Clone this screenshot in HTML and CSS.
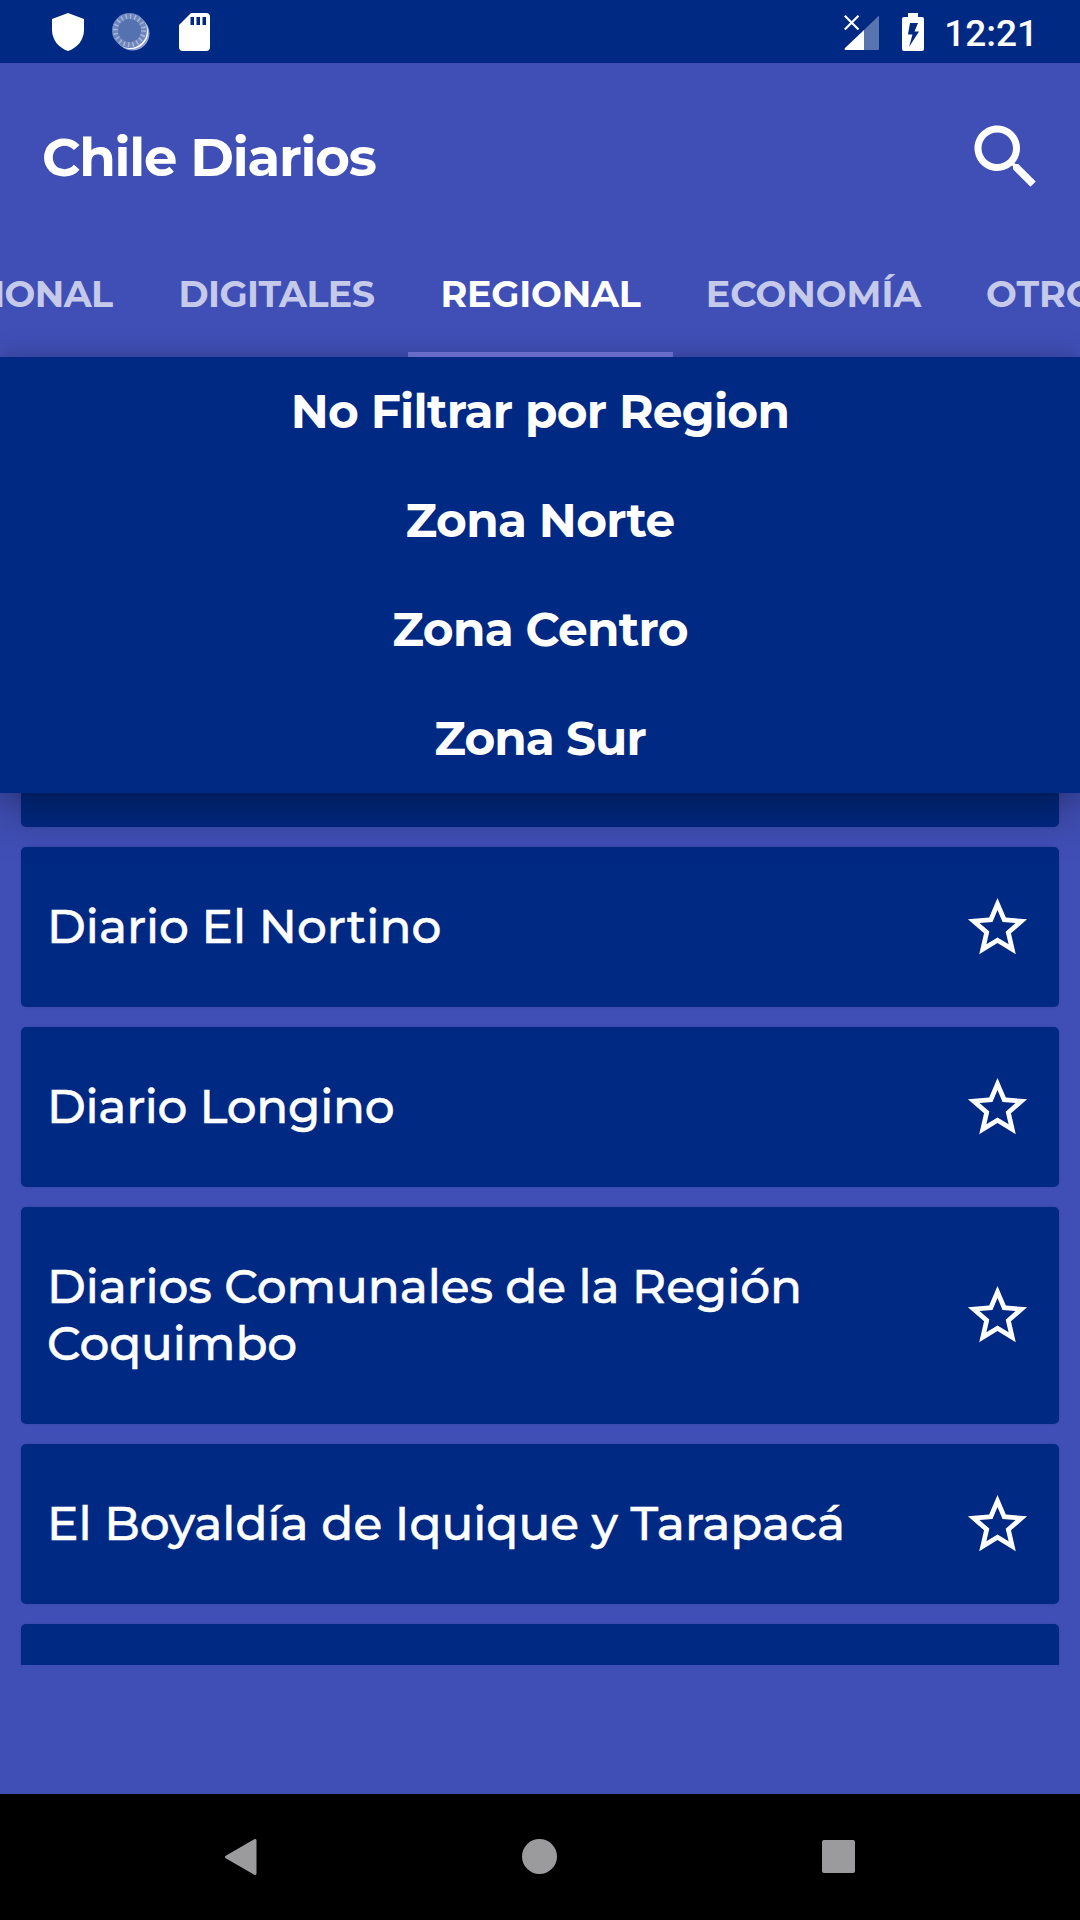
FILE: index.html
```html
<!DOCTYPE html>
<html lang="es">
<head>
  <meta charset="UTF-8">
  <meta name="viewport" content="width=device-width, initial-scale=1.0">
  <title>Chile Diarios</title>
  <link rel="stylesheet" href="styles.css">
</head>
<body>

  <!-- Status bar -->
  <div class="status-bar">
    <div class="status-left">
      <svg class="icon-shield" width="32" height="38" viewBox="0 0 32 38"><path d="M16 0L32 6V17C32 27 25 35 16 38C7 35 0 27 0 17V6Z" fill="#fff"/></svg>
      <svg class="icon-sync" width="38" height="38" viewBox="0 0 38 38">
        <circle cx="20.5" cy="20.5" r="17" fill="#8fa3cf"/>
        <circle cx="19" cy="19" r="17" fill="#fff"/>
        <circle cx="17.5" cy="17.5" r="17.5" fill="#6f87bd"/>
        <circle cx="17.5" cy="17.5" r="14" fill="none" stroke="#a9b7dc" stroke-width="5" stroke-dasharray="1.4 3"/>
        <circle cx="17.5" cy="17.5" r="11.5" fill="#5572b0"/>
      </svg>
      <svg class="icon-sd" width="31" height="38" viewBox="0 0 31 38"><path fill="#fff" fill-rule="evenodd" d="M12 0H27Q31 0 31 4V34Q31 38 27 38H4Q0 38 0 34V12ZM11.5 4V12H15V4ZM17.5 4V12H21V4ZM23.5 4V12H27V4Z"/></svg>
    </div>
    <div class="status-right">
      <svg class="icon-signal" width="36" height="36" viewBox="0 0 36 36">
        <path d="M20 15L35 0.5V34Q35 35 34 35H20Z" fill="#5a74b0"/>
        <path d="M20 15V35H1Q0 34 1 33Z" fill="#fff"/>
        <path d="M0.8 0.8L14.5 14.5M14.5 0.8L0.8 14.5" stroke="#fff" stroke-width="2.2"/>
      </svg>
      <svg class="icon-battery" width="22" height="38" viewBox="0 0 22 38"><path fill="#fff" fill-rule="evenodd" d="M6 0H16V4H20Q22 4 22 6V36Q22 38 20 38H2Q0 38 0 36V6Q0 4 2 4H6ZM8 10L6 21.5H10.5L7 34L17 18.5H12.5L16 10Z"/></svg>
      <span class="clock">12:21</span>
    </div>
  </div>

  <!-- App header -->
  <header class="app-bar">
    <h1>Chile Diarios</h1>
    <svg class="search" width="84" height="84" viewBox="0 0 24 24"><path fill="#fff" d="M15.5 14h-.79l-.28-.27C15.41 12.59 16 11.11 16 9.5 16 5.91 13.09 3 9.5 3S3 5.91 3 9.5 5.91 16 9.5 16c1.61 0 3.09-.59 4.23-1.57l.27.28v.79l5 4.99L20.49 19l-4.99-5zm-6 0C7.01 14 5 11.99 5 9.5S7.01 5 9.5 5 14 7.01 14 9.5 11.99 14 9.5 14z"/></svg>
  </header>

  <!-- Tabs -->
  <nav class="tabs">
    <div class="tab tab-nacional">NACIONAL</div>
    <div class="tab tab-digitales">DIGITALES</div>
    <div class="tab tab-regional active">REGIONAL</div>
    <div class="tab tab-economia">ECONOMÍA</div>
    <div class="tab tab-otros">OTROS</div>
  </nav>

  <!-- Region filter -->
  <div class="filter">
    <div class="filter-item">No Filtrar por Region</div>
    <div class="filter-item">Zona Norte</div>
    <div class="filter-item">Zona Centro</div>
    <div class="filter-item filter-sur">Zona Sur</div>
  </div>

  <!-- Newspaper list -->
  <main class="list">
    <div class="card card-first"></div>
    <div class="card">
      <span class="name">Diario El Nortino</span>
      <svg class="star" viewBox="0 0 24 24"><use href="#star"/></svg>
    </div>
    <div class="card">
      <span class="name name-longino">Diario Longino</span>
      <svg class="star" viewBox="0 0 24 24"><use href="#star"/></svg>
    </div>
    <div class="card card-tall">
      <span class="name name-comunales">Diarios Comunales de la Región<br>Coquimbo</span>
      <svg class="star" viewBox="0 0 24 24"><use href="#star"/></svg>
    </div>
    <div class="card">
      <span class="name">El Boyaldía de Iquique y Tarapacá</span>
      <svg class="star" viewBox="0 0 24 24"><use href="#star"/></svg>
    </div>
    <div class="card card-last"></div>
  </main>

  <!-- Android navigation -->
  <footer class="nav-bar">
    <svg width="32" height="36" viewBox="0 0 32 36"><path d="M30 1.5V34.5L1.5 18Z" fill="#9b9b9d" stroke="#9b9b9d" stroke-width="3" stroke-linejoin="round"/></svg>
    <div class="nav-home"></div>
    <div class="nav-recent"></div>
  </footer>

  <!-- Shared star icon -->
  <svg class="sprite" width="0" height="0">
    <symbol id="star" viewBox="0 0 24 24"><path fill="#fff" d="M22 9.24l-7.19-.62L12 2 9.19 8.63 2 9.24l5.46 4.73L5.82 21 12 17.27 18.18 21l-1.63-7.03L22 9.24zM12 15.4l-3.76 2.27 1-4.28-3.32-2.88 4.38-.38L12 6.1l1.71 4.04 4.38.38-3.32 2.88 1 4.28L12 15.4z"/></symbol>
  </svg>

</body>
</html>
```

FILE: styles.css
```css
/* General Page Styling */
* {
  box-sizing: border-box;
}

body {
  margin: 0;
  height: 1920px;
  display: flex;
  flex-direction: column;
  overflow: hidden;
  background-color: #404fb6;
  color: #fff;
  font-family: 'Montserrat', 'Inter', sans-serif;
}

svg {
  display: block;
  flex-shrink: 0;
}

/* Status Bar */
.status-bar {
  height: 63px;
  flex-shrink: 0;
  padding: 0 42px 0 52px;
  display: flex;
  justify-content: space-between;
  align-items: center;
  background-color: #002984;
}

.status-left,
.status-right {
  display: flex;
  align-items: center;
}

.icon-sync {
  margin-left: 28px;
}

.icon-sd {
  margin-left: 29px;
}

.icon-signal {
  margin-top: 3px;
}

.icon-battery {
  margin: 0 20px 0 22px;
}

.clock {
  padding-top: 3px;
  font-family: 'Roboto', sans-serif;
  font-size: 37px;
  font-weight: 500;
}

/* App Bar */
.app-bar {
  height: 168px;
  flex-shrink: 0;
  padding: 10px 32px 0 42px;
  display: flex;
  justify-content: space-between;
  align-items: flex-start;
}

.app-bar h1 {
  margin: 53px 0 0;
  font-size: 53px;
  line-height: 62px;
  font-weight: 700;
  letter-spacing: -1.2px;
}

.search {
  margin-top: 42px;
}

/* Tabs */
.tabs {
  height: 126px;
  flex-shrink: 0;
  display: flex;
  overflow: hidden;
  font-size: 36.5px;
  font-weight: 700;
}

.tab {
  flex-shrink: 0;
  height: 126px;
  line-height: 126px;
  text-align: center;
  color: #c5caeb;
  border-bottom: 5px solid transparent;
}

.tab.active {
  color: #fff;
  border-bottom-color: #7579e0;
}

.tab-nacional {
  width: 268px;
  margin-left: -122px;
  letter-spacing: -0.6px;
}

.tab-digitales {
  width: 262px;
  padding-right: 1px;
  letter-spacing: -0.6px;
}

.tab-regional {
  width: 265px;
  letter-spacing: -0.2px;
}

.tab-economia {
  width: 281px;
}

.tab-otros {
  width: 200px;
  padding-left: 32px;
  text-align: left;
}

/* Region Filter */
.filter {
  position: relative;
  z-index: 1;
  height: 436px;
  flex-shrink: 0;
  background-color: #002984;
  box-shadow: 0 20px 44px rgba(0, 0, 0, 0.3), 0 0 20px rgba(0, 0, 0, 0.14);
  font-size: 47px;
  font-weight: 700;
}

.filter-item {
  height: 109px;
  line-height: 110px;
  text-align: center;
  letter-spacing: -0.7px;
}

.filter-sur {
  letter-spacing: -1px;
}

/* Newspaper List */
.list {
  height: 872px;
  flex-shrink: 0;
  padding: 0 21px;
  overflow: hidden;
}

.card {
  height: 160px;
  margin-bottom: 20px;
  padding: 0 26px;
  display: flex;
  justify-content: space-between;
  align-items: center;
  background-color: #002984;
  border-radius: 5px;
  box-shadow: 0 0 3px rgba(0, 0, 0, 0.12);
}

.card-first {
  height: 34px;
  border-radius: 0 0 5px 5px;
}

.card-tall {
  height: 217px;
}

.name {
  padding-bottom: 1px;
  font-size: 47px;
  line-height: 57px;
  font-weight: 500;
  white-space: nowrap;
  -webkit-text-stroke: 0.5px #fff;
}

.name-longino {
  letter-spacing: -0.3px;
}

.name-comunales {
  letter-spacing: -0.1px;
}

.star {
  width: 71px;
  height: 71px;
}

/* Android Navigation */
.nav-bar {
  height: 126px;
  margin-top: auto;
  flex-shrink: 0;
  padding: 0 225px 1px;
  display: flex;
  justify-content: space-between;
  align-items: center;
  background-color: #000;
}

.nav-home {
  width: 35px;
  height: 35px;
  border-radius: 50%;
  background-color: #9b9b9d;
}

.nav-recent {
  width: 33px;
  height: 33px;
  border-radius: 2px;
  background-color: #9b9b9d;
}

.sprite {
  position: absolute;
}
```
